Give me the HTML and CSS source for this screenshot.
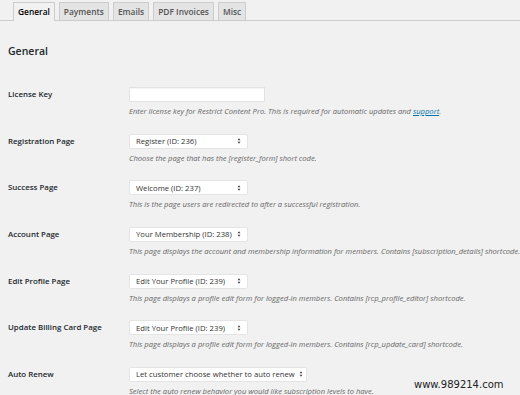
FILE: index.html
```html
<!DOCTYPE html>
<html>
<head>
<meta charset="utf-8">
<link rel="stylesheet" href="styles.css">
</head>
<body>
<div class="page">
  <nav class="tabs">
    <span class="tab active">General</span>
    <span class="tab">Payments</span>
    <span class="tab">Emails</span>
    <span class="tab">PDF Invoices</span>
    <span class="tab">Misc</span>
  </nav>
  <h2 class="title">General</h2>
  <div class="form">
    <div class="row">
      <div class="label">License Key</div>
      <div class="field">
        <div class="input"></div>
        <p class="desc">Enter license key for Restrict Content Pro. This is required for automatic updates and <a href="#">support</a>.</p>
      </div>
    </div>
    <div class="row">
      <div class="label">Registration Page</div>
      <div class="field">
        <div class="select"><span>Register (ID: 236)</span><svg class="arrow" viewBox="0 0 6 9" width="6" height="9"><path d="M3 0.5 L5.2 3.5 H0.8 Z M3 8.5 L5.2 5.5 H0.8 Z" fill="#444"/></svg></div>
        <p class="desc">Choose the page that has the [register_form] short code.</p>
      </div>
    </div>
    <div class="row">
      <div class="label">Success Page</div>
      <div class="field">
        <div class="select"><span>Welcome (ID: 237)</span><svg class="arrow" viewBox="0 0 6 9" width="6" height="9"><path d="M3 0.5 L5.2 3.5 H0.8 Z M3 8.5 L5.2 5.5 H0.8 Z" fill="#444"/></svg></div>
        <p class="desc">This is the page users are redirected to after a successful registration.</p>
      </div>
    </div>
    <div class="row">
      <div class="label">Account Page</div>
      <div class="field">
        <div class="select"><span>Your Membership (ID: 238)</span><svg class="arrow" viewBox="0 0 6 9" width="6" height="9"><path d="M3 0.5 L5.2 3.5 H0.8 Z M3 8.5 L5.2 5.5 H0.8 Z" fill="#444"/></svg></div>
        <p class="desc">This page displays the account and membership information for members. Contains [subscription_details] shortcode.</p>
      </div>
    </div>
    <div class="row">
      <div class="label">Edit Profile Page</div>
      <div class="field">
        <div class="select"><span>Edit Your Profile (ID: 239)</span><svg class="arrow" viewBox="0 0 6 9" width="6" height="9"><path d="M3 0.5 L5.2 3.5 H0.8 Z M3 8.5 L5.2 5.5 H0.8 Z" fill="#444"/></svg></div>
        <p class="desc">This page displays a profile edit form for logged-in members. Contains [rcp_profile_editor] shortcode.</p>
      </div>
    </div>
    <div class="row">
      <div class="label">Update Billing Card Page</div>
      <div class="field">
        <div class="select"><span>Edit Your Profile (ID: 239)</span><svg class="arrow" viewBox="0 0 6 9" width="6" height="9"><path d="M3 0.5 L5.2 3.5 H0.8 Z M3 8.5 L5.2 5.5 H0.8 Z" fill="#444"/></svg></div>
        <p class="desc">This page displays a profile edit form for logged-in members. Contains [rcp_update_card] shortcode.</p>
      </div>
    </div>
    <div class="row">
      <div class="label">Auto Renew</div>
      <div class="field">
        <div class="select wide"><span>Let customer choose whether to auto renew</span><svg class="arrow" viewBox="0 0 6 9" width="6" height="9"><path d="M3 0.5 L5.2 3.5 H0.8 Z M3 8.5 L5.2 5.5 H0.8 Z" fill="#444"/></svg></div>
        <p class="desc">Select the auto renew behavior you would like subscription levels to have.</p>
      </div>
    </div>
  </div>
  <div class="watermark">www.989214.com</div>
</div>
</body>
</html>
```

FILE: styles.css
```css
html, body {
  margin: 0;
  padding: 0;
  background: #f1f1f1;
  overflow: hidden;
}
.page {
  position: relative;
  width: 520px;
  height: 395px;
  overflow: hidden;
  font-family: "Open Sans", "Noto Sans", sans-serif;
  color: #23282d;
}
.tabs {
  display: flex;
  gap: 4px;
  padding: 2px 0 0 13px;
  border-bottom: 1px solid #ccc;
  height: 18px;
}
.tab {
  display: block;
  height: 17px;
  line-height: 17px;
  padding: 0 4px;
  font-size: 8.4px;
  font-weight: 600;
  color: #555;
  background: #e4e4e4;
  border: 1px solid #ccc;
  border-bottom: none;
}
.tab.active {
  background: #f1f1f1;
  color: #000;
  height: 18px;
}
.title {
  margin: 22px 0 28px 8px;
  font-size: 10.5px;
  line-height: 16px;
  font-weight: 600;
  color: #23282d;
}
.form {
  display: flex;
  flex-direction: column;
}
.row {
  display: grid;
  grid-template-columns: 121px auto;
  padding: 0 0 16.67px 8px;
}
.label {
  font-size: 7.9px;
  font-weight: 600;
  line-height: 15px;
  color: #23282d;
  white-space: nowrap;
}
.field {
  display: flex;
  flex-direction: column;
  align-items: flex-start;
  min-width: 0;
}
.input {
  width: 134px;
  height: 13px;
  background: #fff;
  border: 1px solid #e2e2e2;
  box-shadow: inset 0 1px 1px rgba(0,0,0,0.04);
}
.select {
  display: flex;
  align-items: center;
  justify-content: space-between;
  box-sizing: border-box;
  width: 119px;
  height: 15px;
  padding: 0 6px 0 6px;
  background: #fff;
  border: 1px solid #e4e4e4;
  border-radius: 2px;
  font-size: 7.7px;
  color: #333;
  white-space: nowrap;
}
.select.wide {
  width: 178px;
}
.arrow {
  flex: none;
  width: 4px;
  height: 6px;
  margin-left: 4px;
}
.desc {
  margin: 4px 0 0 0;
  font-size: 7.6px;
  line-height: 11px;
  font-style: italic;
  color: #666;
  white-space: nowrap;
}
.desc a {
  color: #0073aa;
  text-decoration: underline;
}
.watermark {
  position: absolute;
  left: 414px;
  top: 379px;
  font-family: "DejaVu Sans", sans-serif;
  font-size: 10px;
  color: #222;
}
```
